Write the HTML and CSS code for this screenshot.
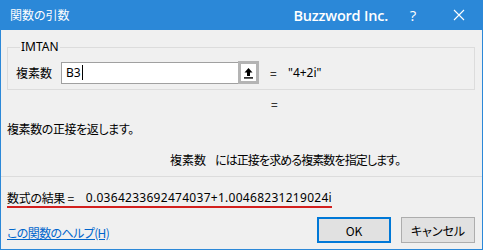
FILE: index.html
```html
<!DOCTYPE html>
<html lang="ja">
<head>
<meta charset="utf-8">
<title>関数の引数</title>
<link rel="stylesheet" href="styles.css">
</head>
<body>
<div class="window">
  <div class="titlebar">
    <span class="title">関数の引数</span>
    <span class="brand">Buzzword Inc.</span>
    <span class="tbtn help">?</span>
    <span class="tbtn close">
      <svg width="12" height="12" viewBox="0 0 12 12"><path d="M1 1L11 11M11 1L1 11" stroke="#fff" stroke-width="1.1" fill="none"/></svg>
    </span>
  </div>
  <div class="content">
    <fieldset class="group">
      <legend class="legend">IMTAN</legend>
      <div class="argrow">
        <span class="arglabel">複素数</span>
        <div class="input"><span class="val">B3</span><span class="caret"></span></div>
        <div class="collapse">
          <svg width="11" height="12" viewBox="0 0 11 12"><path d="M5.5 1L1.5 5.5H4V9H7V5.5H9.5Z" fill="#000"/><rect x="1" y="10.2" width="9" height="1.4" fill="#000"/></svg>
        </div>
        <span class="eq">=</span>
        <span class="argval">"4+2i"</span>
      </div>
    </fieldset>
    <div class="resrow"><span class="eq2">=</span></div>
    <div class="desc">複素数の正接を返します。</div>
    <div class="argdesc"><span class="argname">複素数</span><span class="argtext">には正接を求める複素数を指定します。</span></div>
    <div class="sep"></div>
    <div class="result"><span class="reslabel">数式の結果 =</span><span class="resval">0.0364233692474037+1.00468231219024i</span></div>
    <div class="footer">
      <a class="helplink" href="#">この関数のヘルプ(H)</a>
      <div class="buttons">
        <button class="btn ok">OK</button>
        <button class="btn cancel">キャンセル</button>
      </div>
    </div>
  </div>
</div>
</body>
</html>
```
FILE: styles.css
```css
* { box-sizing: border-box; }
html, body { margin: 0; padding: 0; }
body {
  width: 483px;
  height: 250px;
  overflow: hidden;
  font-family: "Noto Sans CJK JP", "Noto Sans", sans-serif;
  font-feature-settings: "palt";
  font-size: 12px;
  color: #000;
}
.window {
  width: 483px;
  height: 250px;
  border: 1px solid #2b88d8;
  border-top: 0;
  background: #f0f0f0;
  display: flex;
  flex-direction: column;
}
.titlebar {
  height: 30px;
  flex: 0 0 30px;
  background: #2b88d8;
  color: #fff;
  display: flex;
  align-items: center;
  padding-left: 9px;
}
.title { font-size: 12px; line-height: 14px; }
.brand {
  margin-left: auto;
  margin-right: 2px;
  font-family: "Open Sans", "Noto Sans", sans-serif;
  font-weight: 600;
  font-size: 14.5px;
  letter-spacing: -0.2px;
}
.tbtn {
  width: 46px;
  height: 30px;
  display: flex;
  align-items: center;
  justify-content: center;
}
.help { font-family: "Open Sans", sans-serif; font-size: 15px; }
.content {
  flex: 1;
  padding: 0 7px 0 6px;
  display: flex;
  flex-direction: column;
}
.group {
  margin: 10px 0 0 0;
  padding: 0 0 5px 8px;
  border: 1px solid #dcdcdc;
  min-width: 0;
}
.legend {
  padding: 0 1px;
  margin-left: 4px;
  font-family: "Noto Sans", sans-serif;
  font-size: 12px;
  line-height: 14px;
  color: #000;
}
.argrow {
  display: flex;
  align-items: center;
  margin-top: 7px;
  height: 23px;
}
.arglabel { width: 45px; }
.input {
  width: 177px;
  height: 22px;
  border: 1px solid #a0a0a0;
  border-right: 0;
  background: #fff;
  display: flex;
  align-items: center;
  padding-left: 4px;
  font-family: "Noto Sans", sans-serif;
}
.caret { width: 1px; height: 15px; background: #000; margin-left: 1px; }
.collapse {
  width: 21px;
  height: 23px;
  border: 3px solid #b4b4b4;
  background: #fff;
  display: flex;
  align-items: center;
  justify-content: center;
}
.eq { margin-left: 11px; width: 18px; }
.argval { font-family: "Noto Sans", sans-serif; }
.resrow { height: 25px; display: flex; align-items: center; padding-left: 264px; padding-top: 2px; }
.desc { height: 24px; display: flex; align-items: center; padding-top: 3px; letter-spacing: -0.4px; }
.argdesc { height: 30px; display: flex; align-items: center; padding-left: 163px; padding-top: 10px; }
.argname { margin-right: 9px; }
.argtext { letter-spacing: -0.9px; }
.sep { height: 1px; background: #dcdcdc; margin: 7px -7px 0 -6px; }
.result {
  margin-top: 12px;
  height: 19px;
  display: flex;
  align-items: center;
  align-self: flex-start;
  border-bottom: 2px solid #d3201e;
  padding-bottom: 1px;
}
.reslabel { margin-right: 12px; letter-spacing: -0.3px; }
.resval { font-family: "Noto Sans", sans-serif; letter-spacing: 0.28px; }
.footer {
  flex: 1;
  display: flex;
  align-items: flex-start;
  padding-top: 9px;
}
.helplink {
  color: #0066cc;
  text-decoration: underline;
  margin-top: 7px;
  letter-spacing: -0.6px;
}
.buttons { margin-left: auto; display: flex; gap: 10px; }
.btn {
  width: 74px;
  height: 26px;
  font-family: "Noto Sans CJK JP", "Noto Sans", sans-serif;
  font-feature-settings: "palt";
  font-size: 12px;
  background: #e1e1e1;
  border: 1px solid #adadad;
  padding: 0;
  color: #000;
}
.ok { border: 2px solid #0078d7; }
```
